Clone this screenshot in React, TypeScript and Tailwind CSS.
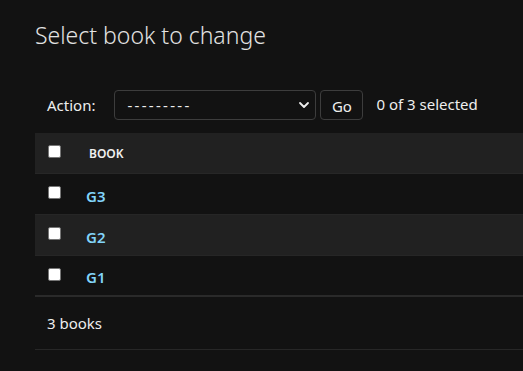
import React from "react";

const font = { fontFamily: '"Noto Sans", "Open Sans", sans-serif' };

function Box() {
  return <span className="block w-[13px] h-[13px] rounded-[2px] bg-white border border-[#767676]" />;
}

export default function App() {
  const rows = ["G3", "G2", "G1"];
  return (
    <div className="min-h-screen w-full bg-[#121212] overflow-hidden" style={font}>
      <div className="pl-[35px] pt-[19px]">
        <h1 className="text-[23px] font-light text-[#e2e2e2] leading-[32px] whitespace-nowrap">Select book to change</h1>
        <div className="mt-[39px] flex items-center h-[30px] pl-[12px] whitespace-nowrap">
          <span className="text-[15px] text-[#eeeeee] mr-[19px]">Action:</span>
          <div className="w-[202px] h-[30px] border border-[#3d3d3d] rounded-[4px] flex items-center justify-between pl-[12px] pr-[5px]">
            <span className="text-[15px] text-[#eeeeee] tracking-[2.3px]">---------</span>
            <svg width="12" height="12" viewBox="0 0 12 12" className="text-[#eeeeee]">
              <path d="M2 4l4 4 4-4" fill="none" stroke="currentColor" strokeWidth="1.8" strokeLinecap="round" strokeLinejoin="round" />
            </svg>
          </div>
          <div className="ml-[4px] w-[43px] h-[30px] border border-[#3d3d3d] rounded-[4px] flex items-center justify-center text-[15px] text-[#eeeeee] pt-[2px]">Go</div>
          <span className="ml-[13px] text-[15px] text-[#eeeeee] -mt-[2px]">0 of 3 selected</span>
        </div>
        <div className="mt-[13px]">
          <div className="h-[41px] bg-[#212121] border-b border-[#272727] flex items-center pl-[13px]">
            <span className="-mt-[3px]"><Box /></span>
            <span className="ml-[28px] text-[12px] font-semibold text-[#f0f0f0] pt-[2px]">BOOK</span>
          </div>
          {rows.map((r, i) => (
            <div
              key={r}
              className={`h-[41px] flex items-center pl-[13px] ${i % 2 === 1 ? "bg-[#212121]" : "bg-[#121212]"} ${i === 2 ? "border-b-2 border-[#2a2a2a]" : "border-b border-[#262626]"}`}
            >
              <span className="-mt-[3px]"><Box /></span>
              <span className="ml-[25px] text-[15px] font-semibold text-[#81d4fa] pt-[4px]">{r}</span>
            </div>
          ))}
          <div className="h-[53px] flex items-center pl-[12px] border-b border-[#272727] text-[15px] text-[#eeeeee]">3 books</div>
        </div>
      </div>
    </div>
  );
}
